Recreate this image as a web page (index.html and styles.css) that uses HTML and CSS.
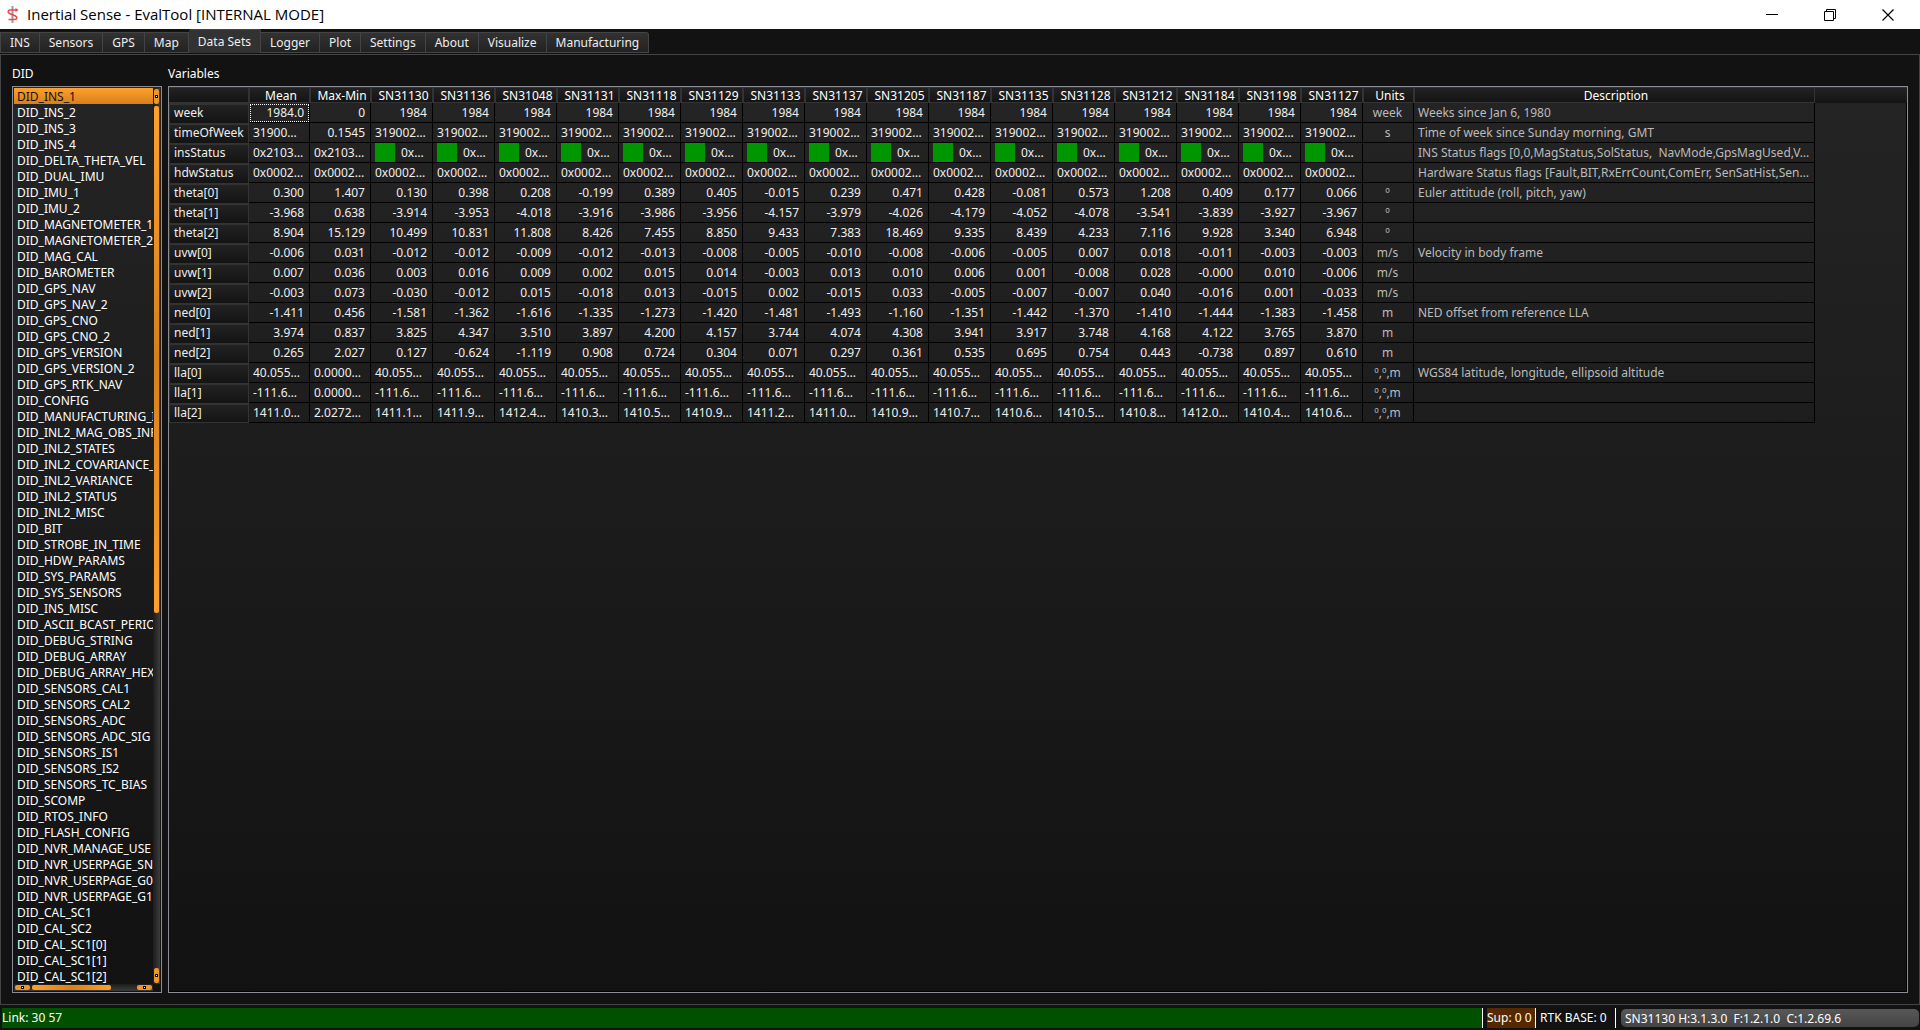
FILE: index.html
```html
<!DOCTYPE html>
<html lang="en">
<head>
<meta charset="utf-8">
<title>Inertial Sense - EvalTool [INTERNAL MODE]</title>
<link rel="stylesheet" href="styles.css">
</head>
<body>
<header class="titlebar">
  <svg class="logo" viewBox="0 0 12 18" width="12" height="18" aria-hidden="true">
    <path d="M5.500 0v17" stroke="#9a9a9a" stroke-width="2" fill="none"/>
    <path d="M10 4H3C.8 4 .5 6.500 2.500 7.500L8.500 10c2 1 1.500 3.500-.5 3.500H1.500" stroke="#ee4850" stroke-width="1.600" fill="none"/>
    <path d="M8.500 2l3 2-3 2z" fill="#e8404a"/>
  </svg>
  <h1 class="title">Inertial Sense - EvalTool [INTERNAL MODE]</h1>
  <div class="controls">
    <button type="button" aria-label="Minimize"><svg width="12" height="12" viewBox="0 0 12 12"><path d="M0 5.500h12" stroke="#000" fill="none"/></svg></button>
    <button type="button" aria-label="Restore"><svg width="12" height="12" viewBox="0 0 12 12"><path d="M.5 2.500h9v9h-9zM2.500 2.500v-2h9v9h-2" stroke="#000" fill="none"/></svg></button>
    <button type="button" aria-label="Close"><svg width="12" height="12" viewBox="0 0 12 12"><path d="M.5.5l11 11M11.500.5l-11 11" stroke="#000" stroke-width="1.200" fill="none"/></svg></button>
  </div>
</header>
<nav class="tabs" role="tablist">
  <button type="button" role="tab">INS</button>
  <button type="button" role="tab">Sensors</button>
  <button type="button" role="tab">GPS</button>
  <button type="button" role="tab">Map</button>
  <button type="button" role="tab" class="active" aria-selected="true">Data Sets</button>
  <button type="button" role="tab">Logger</button>
  <button type="button" role="tab">Plot</button>
  <button type="button" role="tab">Settings</button>
  <button type="button" role="tab">About</button>
  <button type="button" role="tab">Visualize</button>
  <button type="button" role="tab">Manufacturing</button>
</nav>
<main class="page">
  <section class="did">
    <h2 class="caption" id="did-label">DID</h2>
    <div class="frame did-frame">
      <ul class="did-list" role="listbox" aria-labelledby="did-label">
        <li class="selected" role="option" aria-selected="true">DID_INS_1
        <li role="option">DID_INS_2
        <li role="option">DID_INS_3
        <li role="option">DID_INS_4
        <li role="option">DID_DELTA_THETA_VEL
        <li role="option">DID_DUAL_IMU
        <li role="option">DID_IMU_1
        <li role="option">DID_IMU_2
        <li role="option">DID_MAGNETOMETER_1
        <li role="option">DID_MAGNETOMETER_2
        <li role="option">DID_MAG_CAL
        <li role="option">DID_BAROMETER
        <li role="option">DID_GPS_NAV
        <li role="option">DID_GPS_NAV_2
        <li role="option">DID_GPS_CNO
        <li role="option">DID_GPS_CNO_2
        <li role="option">DID_GPS_VERSION
        <li role="option">DID_GPS_VERSION_2
        <li role="option">DID_GPS_RTK_NAV
        <li role="option">DID_CONFIG
        <li role="option">DID_MANUFACTURING_I
        <li role="option">DID_INL2_MAG_OBS_INF
        <li role="option">DID_INL2_STATES
        <li role="option">DID_INL2_COVARIANCE_
        <li role="option">DID_INL2_VARIANCE
        <li role="option">DID_INL2_STATUS
        <li role="option">DID_INL2_MISC
        <li role="option">DID_BIT
        <li role="option">DID_STROBE_IN_TIME
        <li role="option">DID_HDW_PARAMS
        <li role="option">DID_SYS_PARAMS
        <li role="option">DID_SYS_SENSORS
        <li role="option">DID_INS_MISC
        <li role="option">DID_ASCII_BCAST_PERIO
        <li role="option">DID_DEBUG_STRING
        <li role="option">DID_DEBUG_ARRAY
        <li role="option">DID_DEBUG_ARRAY_HEX
        <li role="option">DID_SENSORS_CAL1
        <li role="option">DID_SENSORS_CAL2
        <li role="option">DID_SENSORS_ADC
        <li role="option">DID_SENSORS_ADC_SIG
        <li role="option">DID_SENSORS_IS1
        <li role="option">DID_SENSORS_IS2
        <li role="option">DID_SENSORS_TC_BIAS
        <li role="option">DID_SCOMP
        <li role="option">DID_RTOS_INFO
        <li role="option">DID_FLASH_CONFIG
        <li role="option">DID_NVR_MANAGE_USE
        <li role="option">DID_NVR_USERPAGE_SN
        <li role="option">DID_NVR_USERPAGE_G0
        <li role="option">DID_NVR_USERPAGE_G1
        <li role="option">DID_CAL_SC1
        <li role="option">DID_CAL_SC2
        <li role="option">DID_CAL_SC1[0]
        <li role="option">DID_CAL_SC1[1]
        <li role="option">DID_CAL_SC1[2]
      </ul>
      <div class="scroll vertical"><button type="button" aria-label="Scroll up"></button><div class="track"><div class="handle"></div></div><button type="button" aria-label="Scroll down"></button></div>
      <div class="scroll horizontal"><button type="button" aria-label="Scroll left"></button><div class="track"><div class="handle"></div></div><button type="button" aria-label="Scroll right"></button></div>
    </div>
  </section>
  <section class="variables">
    <h2 class="caption">Variables</h2>
    <div class="frame table-frame">
      <table>
        <colgroup><col class="c-name"><col class="c-stat" span="2"><col class="c-sn" span="16"><col class="c-units"><col class="c-desc"><col></colgroup>
        <thead>
          <tr><th class="corner"><th>Mean<th>Max-Min<th>SN31130<th>SN31136<th>SN31048<th>SN31131<th>SN31118<th>SN31129<th>SN31133<th>SN31137<th>SN31205<th>SN31187<th>SN31135<th>SN31128<th>SN31212<th>SN31184<th>SN31198<th>SN31127<th>Units<th>Description<th class="rest">
        </thead>
        <tbody>
          <tr><th>week<td class="focus">1984.0<td>0<td>1984<td>1984<td>1984<td>1984<td>1984<td>1984<td>1984<td>1984<td>1984<td>1984<td>1984<td>1984<td>1984<td>1984<td>1984<td>1984<td class="unit">week<td class="desc">Weeks since Jan 6, 1980
          <tr><th>timeOfWeek<td class="cut">31900…<td>0.1545<td class="cut">319002…<td class="cut">319002…<td class="cut">319002…<td class="cut">319002…<td class="cut">319002…<td class="cut">319002…<td class="cut">319002…<td class="cut">319002…<td class="cut">319002…<td class="cut">319002…<td class="cut">319002…<td class="cut">319002…<td class="cut">319002…<td class="cut">319002…<td class="cut">319002…<td class="cut">319002…<td class="unit">s<td class="desc">Time of week since Sunday morning, GMT
          <tr><th>insStatus<td class="cut">0x2103…<td class="cut">0x2103…<td class="ok">0x…<td class="ok">0x…<td class="ok">0x…<td class="ok">0x…<td class="ok">0x…<td class="ok">0x…<td class="ok">0x…<td class="ok">0x…<td class="ok">0x…<td class="ok">0x…<td class="ok">0x…<td class="ok">0x…<td class="ok">0x…<td class="ok">0x…<td class="ok">0x…<td class="ok">0x…<td class="unit"><td class="desc">INS Status flags [0,0,MagStatus,SolStatus,&nbsp; NavMode,GpsMagUsed,V…
          <tr><th>hdwStatus<td class="cut">0x0002…<td class="cut">0x0002…<td class="cut">0x0002…<td class="cut">0x0002…<td class="cut">0x0002…<td class="cut">0x0002…<td class="cut">0x0002…<td class="cut">0x0002…<td class="cut">0x0002…<td class="cut">0x0002…<td class="cut">0x0002…<td class="cut">0x0002…<td class="cut">0x0002…<td class="cut">0x0002…<td class="cut">0x0002…<td class="cut">0x0002…<td class="cut">0x0002…<td class="cut">0x0002…<td class="unit"><td class="desc">Hardware Status flags [Fault,BIT,RxErrCount,ComErr, SenSatHist,Sen…
          <tr><th>theta[0]<td>0.300<td>1.407<td>0.130<td>0.398<td>0.208<td>-0.199<td>0.389<td>0.405<td>-0.015<td>0.239<td>0.471<td>0.428<td>-0.081<td>0.573<td>1.208<td>0.409<td>0.177<td>0.066<td class="unit">º<td class="desc">Euler attitude (roll, pitch, yaw)
          <tr><th>theta[1]<td>-3.968<td>0.638<td>-3.914<td>-3.953<td>-4.018<td>-3.916<td>-3.986<td>-3.956<td>-4.157<td>-3.979<td>-4.026<td>-4.179<td>-4.052<td>-4.078<td>-3.541<td>-3.839<td>-3.927<td>-3.967<td class="unit">º<td class="desc">
          <tr><th>theta[2]<td>8.904<td>15.129<td>10.499<td>10.831<td>11.808<td>8.426<td>7.455<td>8.850<td>9.433<td>7.383<td>18.469<td>9.335<td>8.439<td>4.233<td>7.116<td>9.928<td>3.340<td>6.948<td class="unit">º<td class="desc">
          <tr><th>uvw[0]<td>-0.006<td>0.031<td>-0.012<td>-0.012<td>-0.009<td>-0.012<td>-0.013<td>-0.008<td>-0.005<td>-0.010<td>-0.008<td>-0.006<td>-0.005<td>0.007<td>0.018<td>-0.011<td>-0.003<td>-0.003<td class="unit">m/s<td class="desc">Velocity in body frame
          <tr><th>uvw[1]<td>0.007<td>0.036<td>0.003<td>0.016<td>0.009<td>0.002<td>0.015<td>0.014<td>-0.003<td>0.013<td>0.010<td>0.006<td>0.001<td>-0.008<td>0.028<td>-0.000<td>0.010<td>-0.006<td class="unit">m/s<td class="desc">
          <tr><th>uvw[2]<td>-0.003<td>0.073<td>-0.030<td>-0.012<td>0.015<td>-0.018<td>0.013<td>-0.015<td>0.002<td>-0.015<td>0.033<td>-0.005<td>-0.007<td>-0.007<td>0.040<td>-0.016<td>0.001<td>-0.033<td class="unit">m/s<td class="desc">
          <tr><th>ned[0]<td>-1.411<td>0.456<td>-1.581<td>-1.362<td>-1.616<td>-1.335<td>-1.273<td>-1.420<td>-1.481<td>-1.493<td>-1.160<td>-1.351<td>-1.442<td>-1.370<td>-1.410<td>-1.444<td>-1.383<td>-1.458<td class="unit">m<td class="desc">NED offset from reference LLA
          <tr><th>ned[1]<td>3.974<td>0.837<td>3.825<td>4.347<td>3.510<td>3.897<td>4.200<td>4.157<td>3.744<td>4.074<td>4.308<td>3.941<td>3.917<td>3.748<td>4.168<td>4.122<td>3.765<td>3.870<td class="unit">m<td class="desc">
          <tr><th>ned[2]<td>0.265<td>2.027<td>0.127<td>-0.624<td>-1.119<td>0.908<td>0.724<td>0.304<td>0.071<td>0.297<td>0.361<td>0.535<td>0.695<td>0.754<td>0.443<td>-0.738<td>0.897<td>0.610<td class="unit">m<td class="desc">
          <tr><th>lla[0]<td class="cut">40.055…<td class="cut">0.0000…<td class="cut">40.055…<td class="cut">40.055…<td class="cut">40.055…<td class="cut">40.055…<td class="cut">40.055…<td class="cut">40.055…<td class="cut">40.055…<td class="cut">40.055…<td class="cut">40.055…<td class="cut">40.055…<td class="cut">40.055…<td class="cut">40.055…<td class="cut">40.055…<td class="cut">40.055…<td class="cut">40.055…<td class="cut">40.055…<td class="unit">º,º,m<td class="desc">WGS84 latitude, longitude, ellipsoid altitude
          <tr><th>lla[1]<td class="cut">-111.6…<td class="cut">0.0000…<td class="cut">-111.6…<td class="cut">-111.6…<td class="cut">-111.6…<td class="cut">-111.6…<td class="cut">-111.6…<td class="cut">-111.6…<td class="cut">-111.6…<td class="cut">-111.6…<td class="cut">-111.6…<td class="cut">-111.6…<td class="cut">-111.6…<td class="cut">-111.6…<td class="cut">-111.6…<td class="cut">-111.6…<td class="cut">-111.6…<td class="cut">-111.6…<td class="unit">º,º,m<td class="desc">
          <tr><th>lla[2]<td class="cut">1411.0…<td class="cut">2.0272…<td class="cut">1411.1…<td class="cut">1411.9…<td class="cut">1412.4…<td class="cut">1410.3…<td class="cut">1410.5…<td class="cut">1410.9…<td class="cut">1411.2…<td class="cut">1411.0…<td class="cut">1410.9…<td class="cut">1410.7…<td class="cut">1410.6…<td class="cut">1410.5…<td class="cut">1410.8…<td class="cut">1412.0…<td class="cut">1410.4…<td class="cut">1410.6…<td class="unit">º,º,m<td class="desc">
        </tbody>
      </table>
    </div>
  </section>
</main>
<footer class="status">
  <span class="link">Link: 30 57</span>
  <span class="sup">Sup: 0 0</span>
  <span class="rtk">RTK BASE: 0</span>
  <select class="device" aria-label="Device">
    <option>SN31130 H:3.1.3.0&nbsp; F:1.2.1.0&nbsp; C:1.2.69.6</option>
  </select>
</footer>
</body>
</html>
```
FILE: styles.css
```css
* { box-sizing: border-box; }

body {
  margin: 0;
  min-height: 100vh;
  display: flex;
  flex-direction: column;
  background: #121212;
  color: #fff;
  font: 12px/16px "Noto Sans", sans-serif;
}

button, select { font: inherit; color: inherit; border: 0; margin: 0; padding: 0; }
h1, h2 { margin: 0; font-weight: 400; }

.titlebar {
  display: flex;
  align-items: center;
  height: 29px;
  padding: 0 3px 0 7px;
  background: #fff;
  color: #000;
}
.logo { margin-right: 8px; }
.title { flex: 1; padding-bottom: 2px; font: 15px/20px "Open Sans", sans-serif; }
.controls { display: flex; }
.controls button {
  width: 58px;
  height: 28px;
  display: flex;
  align-items: center;
  justify-content: center;
  background: none;
}

.tabs {
  display: flex;
  align-items: flex-end;
  height: 25px;
  padding-bottom: 1px;
}
.tabs button {
  height: 21px;
  padding: 1px 9px 0;
  border: 1px solid #444;
  border-left-width: 0;
  background: linear-gradient(#323232, #222);
  color: #eee;
}
.tabs button:first-child { border-left-width: 1px; }
.tabs button:last-child { border-top-right-radius: 3px; }
.tabs .active {
  height: 24px;
  padding-bottom: 1px;
  border-bottom-width: 0;
  border-radius: 2px 2px 0 0;
  background: #323232;
}

.page {
  flex: 1;
  display: flex;
  gap: 6px;
  padding: 11px 11px 11px;
  border: 1px solid #444;
}
.did { width: 150px; display: flex; flex-direction: column; }
.variables { flex: 1; min-width: 0; display: flex; flex-direction: column; }
.caption { font-size: 12px; line-height: 16px; margin-bottom: 4px; }
.frame {
  flex: 1;
  border: 1px solid #8a8d94;
  background: linear-gradient(#242424, #121212);
}

.did-frame {
  display: grid;
  grid-template: 1fr 7px / 1fr 7px;
  padding: 1px;
}
.did-list {
  margin: 0;
  padding: 0;
  list-style: none;
  overflow: hidden;
  white-space: nowrap;
}
.did-list li { height: 16px; padding-left: 3px; line-height: 18px; }
.did-list .selected { background: linear-gradient(#ffa02f, #d7801a); color: #111; }

.scroll { display: flex; gap: 2px; padding: 1px; }
.vertical { flex-direction: column; background: linear-gradient(90deg, #1c1c1c, #3c3c3c); }
.horizontal { background: linear-gradient(#1c1c1c, #3c3c3c); }
.scroll button {
  flex: 0 0 15px;
  border-radius: 2px;
  background:
    linear-gradient(#fff, #fff) center / 1px 1px no-repeat,
    linear-gradient(#000, #000) center / 3px 3px no-repeat,
    #f0952a;
}
.track { flex: 1; }
.handle { border-radius: 2px; }
.vertical .handle {
  height: 59%;
  background: linear-gradient(#ffa02f, #d7801a 50%, #ffa02f);
}
.horizontal .handle {
  width: 77%;
  height: 100%;
  background: linear-gradient(90deg, #ffa02f, #d7801a 50%, #ffa02f);
}

.table-frame { overflow: hidden; box-shadow: inset -1px -1px #000; }
table {
  width: 100%;
  table-layout: fixed;
  border-collapse: separate;
  border-spacing: 0;
  white-space: nowrap;
}
.c-name { width: 80px; }
.c-stat { width: 61px; }
.c-sn { width: 62px; }
.c-units { width: 51px; }
.c-desc { width: 401px; }
th, td { padding: 0; font-weight: 400; overflow: hidden; }
thead th {
  height: 16px;
  padding: 2px 0 0 4px;
  line-height: 12px;
  border: solid #333;
  border-width: 1px 1px 1px 0;
  box-shadow: inset 1px 0 #333;
  background: linear-gradient(#222, #141414);
}
thead .corner { box-shadow: none; }
thead .rest { border-width: 1px 0 0; box-shadow: none; }
tbody th {
  height: 20px;
  padding: 0 0 2px 4px;
  line-height: 16px;
  text-align: left;
  border: solid #333;
  border-width: 2px 1px 0;
  background: linear-gradient(#222, #141414);
  color: #eee;
}
tbody tr:last-child th { padding-bottom: 1px; border-bottom-width: 1px; }
td {
  height: 20px;
  line-height: 19px;
  padding: 0 5px 0 4px;
  text-align: right;
  border: solid #000;
  border-width: 0 1px 1px 0;
  color: #eee;
}
.cut, .desc { text-align: left; }
.unit { text-align: center; }
.unit, .desc { color: #bbb; }
.focus { outline: 1px dotted #fff; outline-offset: -2px; }
.ok { text-align: left; }
.ok::before {
  content: "";
  display: inline-block;
  width: 20px;
  height: 19px;
  margin-right: 6px;
  vertical-align: top;
  background: #009600;
}

.status {
  display: flex;
  align-items: center;
  height: 25px;
  padding: 0 1px 0 2px;
  line-height: 20px;
}
.link { flex: 1; background: #005000; }
.sup, .rtk { border-left: 1px solid #fff; }
.sup { width: 53px; padding-left: 4px; background: #552800 content-box; }
.rtk { width: 81px; padding-left: 4px; border-right: 1px solid #fff; }
.device {
  width: 298px;
  height: 18px;
  margin-left: 5px;
  padding: 0 4px;
  appearance: none;
  border-radius: 5px;
  background: linear-gradient(#585858, #444);
}
```
